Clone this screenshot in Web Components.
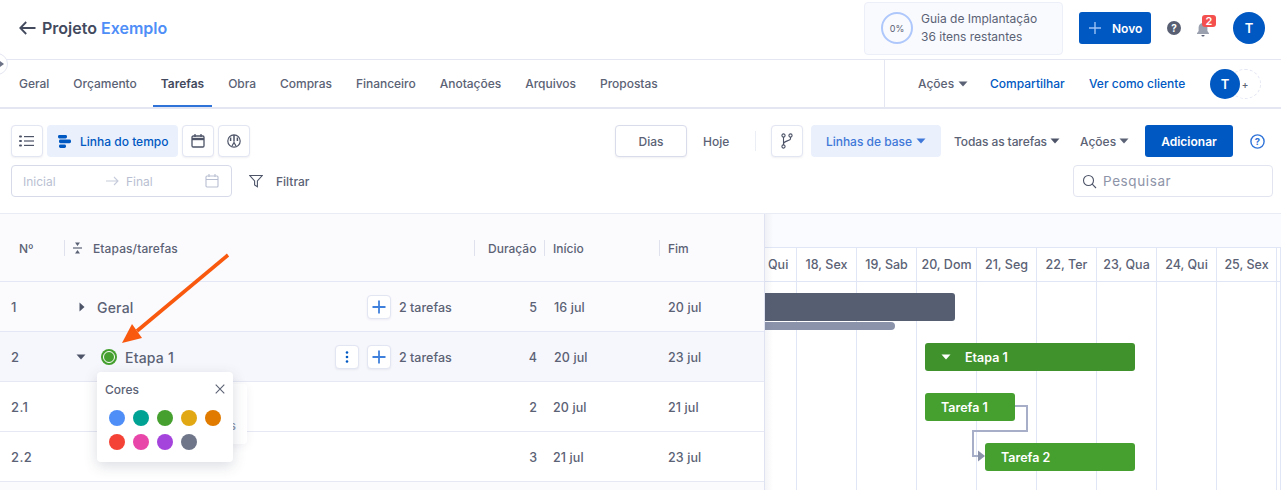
<!DOCTYPE html>
<html lang="pt-BR">
<head>
<meta charset="utf-8">
<title>Projeto Exemplo</title>
<style>
html, body { margin: 0; padding: 0; height: 490px; overflow: hidden; background: #fff; }
body { font-family: Inter, "Liberation Sans", sans-serif; color: #5b6275; }
</style>
</head>
<body>
<project-app></project-app>
<script>
const caret = (color, size = 10) => `<svg width="${size}" height="6" viewBox="0 0 10 6" style="flex:none"><path d="M0.5 0.5h9L5 5.5z" fill="${color}"/></svg>`;

class IconBtn extends HTMLElement {
    connectedCallback() {
        if (this.shadowRoot) return;
        this.attachShadow({ mode: 'open' });
        this.shadowRoot.innerHTML = `
<style>
:host {
    display: inline-flex;
    align-items: center;
    justify-content: center;
    box-sizing: border-box;
    width: var(--btn-size, 32px);
    height: var(--btn-size, 32px);
    background: #fff;
    border: 1px solid #e2e5f2;
    border-radius: 4px;
    box-shadow: 0 1px 2px rgba(60, 70, 110, .08);
    flex: none;
}
</style>
<slot></slot>`;
    }
}

class AppHeader extends HTMLElement {
    connectedCallback() {
        this.attachShadow({ mode: 'open' });
        this.shadowRoot.innerHTML = `
<style>
:host { display: flex; align-items: center; height: 56px; padding: 0 16px 3px 19px; border-bottom: 1px solid #e4e7f2; }
.back { display: block; margin-right: 6px; }
h1 { margin: 0; font-size: 16px; font-weight: 600; color: #434a5e; line-height: 20px; }
h1 span { color: #4f8ef7; }
.guide { margin-left: auto; width: 199px; height: 53px; box-sizing: border-box; background: #f9fafe; border: 1px solid #eceff8; border-radius: 4px; display: flex; align-items: center; padding-left: 16px; }
.ring { width: 32px; height: 32px; box-sizing: border-box; border: 2px solid #afc8fb; border-radius: 50%; display: flex; align-items: center; justify-content: center; font-size: 9px; color: #5b6275; margin-right: 8px; }
.guide div.t { font-size: 12px; line-height: 18px; color: #5b6275; }
.novo { margin-left: 16px; width: 72px; height: 32px; background: #0058c2; border-radius: 3px; color: #fff; font-size: 12px; font-weight: 600; display: flex; align-items: center; box-sizing: border-box; padding-left: 10px; gap: 11px; }
.help { margin-left: 16px; display: block; }
.bell { position: relative; margin-left: 15px; width: 16px; height: 32px; display: flex; align-items: center; }
.bell svg { margin-top: 3px; }
.badge { position: absolute; left: 6px; top: 3px; width: 14px; height: 12px; border-radius: 3px; background: #f4504d; color: #fff; font-size: 11px; font-weight: 600; line-height: 12px; text-align: center; }
.avatar { margin-left: 21px; width: 32px; height: 32px; border-radius: 50%; background: #0058c2; color: #fff; font-size: 13px; font-weight: 600; display: flex; align-items: center; justify-content: center; }
</style>
<svg class="back" width="17" height="14" viewBox="0 0 17 14" fill="none" stroke="#434a5e" stroke-width="1.8"><path d="M16.5 7H1.5M7.2 1L1.3 7l5.9 6"/></svg>
<h1>Projeto <span>Exemplo</span></h1>
<div class="guide">
  <div class="ring">0%</div>
  <div class="t">Guia de Implantação<br>36 itens restantes</div>
</div>
<div class="novo"><svg width="12" height="12" viewBox="0 0 12 12" stroke="#9cc1f5" stroke-width="1.4"><path d="M6 0v12M0 6h12"/></svg>Novo</div>
<svg class="help" width="14" height="14" viewBox="0 0 14 14"><circle cx="7" cy="7" r="7" fill="#585f72"/><text x="7" y="10.5" text-anchor="middle" font-size="10" font-weight="700" fill="#fff" font-family="Inter">?</text></svg>
<div class="bell">
  <svg width="14" height="15" viewBox="0 0 14 15" fill="#9aa0ae"><path d="M7 1a4.4 4.4 0 0 0-4.4 4.4V9L1 11.2v.8h12v-.8L11.4 9V5.4A4.4 4.4 0 0 0 7 1z"/><path d="M5.4 13h3.2a1.6 1.6 0 0 1-3.2 0z" fill="#585f72"/></svg>
  <div class="badge">2</div>
</div>
<div class="avatar">T</div>`;
    }
}

class AppTabs extends HTMLElement {
    connectedCallback() {
        this.attachShadow({ mode: 'open' });
        const tabs = ['Geral', 'Orçamento', 'Tarefas', 'Obra', 'Compras', 'Financeiro', 'Anotações', 'Arquivos', 'Propostas'];
        this.shadowRoot.innerHTML = `
<style>
:host { display: flex; height: 47px; border-bottom: 2px solid #e4e7f2; font-size: 12px; position: relative; }
.handle { position: absolute; left: -14px; top: -7px; width: 20px; height: 20px; border: 1px solid #e4e7f2; border-radius: 50%; background: #fff; }
.handle::after { content: ''; position: absolute; left: 13px; top: 7px; border-left: 4px solid #6d7488; border-top: 3px solid transparent; border-bottom: 3px solid transparent; }
.tabs { display: flex; padding-left: 11px; width: 884px; box-sizing: border-box; gap: 8px; }
.tab { padding: 0 8px; height: 47px; line-height: 48px; color: #5b6275; font-weight: 500; white-space: nowrap; letter-spacing: -.02px; }
.tab.on { color: #434a5e; font-weight: 600; border-bottom: 2px solid #2f73d8; height: 45px; }
.right { flex: 1; display: flex; align-items: center; border-left: 1px solid #e4e7f2; padding-left: 33px; font-weight: 500; }
.acoes { display: flex; align-items: center; gap: 4px; color: #5b6275; width: 72px; }
a { color: #0058c2; text-decoration: none; }
.share { width: 99px; }
.view { width: 121px; }
.people { display: flex; align-items: center; position: relative; width: 51px; height: 30px; }
.dash { position: absolute; left: 19px; top: 0; width: 32px; height: 30px; box-sizing: border-box; border: 1px dashed #e2e5f2; border-radius: 50%; color: #5b6275; font-size: 10px; line-height: 28px; text-align: center; }
.av { position: absolute; left: 0; top: 0; width: 30px; height: 30px; border-radius: 50%; background: #0058c2; color: #fff; font-size: 13px; font-weight: 600; text-align: center; line-height: 30px; }
</style>
<div class="handle"></div>
<div class="tabs">${tabs.map(t => `<div class="tab${t === 'Tarefas' ? ' on' : ''}">${t}</div>`).join('')}</div>
<div class="right">
  <div class="acoes">Ações ${caret('#5b6275')}</div>
  <a class="share">Compartilhar</a>
  <a class="view">Ver como cliente</a>
  <div class="people"><div class="dash">+</div><div class="av">T</div></div>
</div>`;
    }
}

class GanttToolbar extends HTMLElement {
    connectedCallback() {
        this.attachShadow({ mode: 'open' });
        this.shadowRoot.innerHTML = `
<style>
:host { display: block; height: 105px; box-sizing: border-box; padding: 16px 8px 0 11px; font-size: 12px; font-weight: 500; border-bottom: 1px solid #e9ebf5; background: #fff; }
.row { display: flex; align-items: center; height: 32px; }
.row + .row { margin-top: 8px; }
.group { display: flex; align-items: center; gap: 4px; }
.tl { width: 131px; height: 32px; border-radius: 4px; background: #eaf0fc; color: #0058c2; display: flex; align-items: center; gap: 9px; padding-left: 11px; box-sizing: border-box; }
.right { margin-left: auto; display: flex; align-items: center; }
.dias { width: 72px; height: 32px; box-sizing: border-box; border: 1px solid #d9dcea; border-radius: 4px; background: #fff; display: flex; align-items: center; justify-content: center; box-shadow: 0 1px 2px rgba(60, 70, 110, .08); }
.hoje { margin-left: 16px; width: 36px; }
.sep { width: 1px; height: 20px; background: #eceef5; margin: 0 15px 0 16px; }
.base { margin-left: 8px; width: 130px; height: 32px; border-radius: 4px; background: #eaf0fc; color: #3f78d8; display: flex; align-items: center; justify-content: center; gap: 4px; }
.drop { display: flex; align-items: center; justify-content: space-between; white-space: nowrap; }
.all { margin-left: 13px; width: 106px; letter-spacing: -.1px; }
.act { margin-left: 20px; width: 49px; }
.add { margin-left: 16px; width: 88px; height: 32px; border-radius: 3px; background: #0058c2; color: #fff; font-weight: 600; display: flex; align-items: center; justify-content: center; }
.qm { margin-left: 17px; display: block; margin-right: 8px; }
.dates { width: 221px; height: 32px; box-sizing: border-box; border: 1px solid #d7dbe9; border-radius: 4px; display: flex; align-items: center; padding-left: 11px; color: #b9bfd2; font-weight: 400; position: relative; }
.dates .a { width: 83px; }
.dates .b { margin-left: 7px; }
.dates svg.c { position: absolute; right: 12px; top: 8px; }
.filter { margin-left: 17px; display: block; margin-right: 13px; }
.search { margin-left: auto; width: 200px; height: 32px; box-sizing: border-box; border: 1px solid #e2e5f0; border-radius: 4px; display: flex; align-items: center; padding-left: 8px; gap: 6px; color: #8e94a8; font-weight: 400; font-size: 13.5px; letter-spacing: .6px; }
</style>
<div class="row">
  <div class="group">
    <icon-btn><svg width="16" height="12" viewBox="0 0 16 12" fill="#4d5468"><rect x="0" y="0.5" width="3" height="2" rx="1"/><rect x="0" y="5" width="3" height="2" rx="1"/><rect x="0" y="9.5" width="3" height="2" rx="1"/><rect x="5" y="1" width="10" height="1.2"/><rect x="5" y="5.4" width="10" height="1.2"/><rect x="5" y="9.8" width="10" height="1.2"/></svg></icon-btn>
    <div class="tl"><svg width="13" height="13" viewBox="0 0 13 13" fill="#0058c2"><rect x="0" y="0" width="9" height="3.4" rx="1.4"/><rect x="1" y="4.6" width="12" height="3.6" rx="1.4"/><rect x="1" y="9.5" width="7" height="3.4" rx="1.4"/></svg>Linha do tempo</div>
    <icon-btn><svg width="14" height="14" viewBox="0 0 14 14" fill="none" stroke="#4d5468" stroke-width="1.3"><rect x="1" y="2" width="12" height="11" rx="1.2"/><path d="M1 5h12" stroke-width="2.4"/><path d="M4 0v3M10 0v3"/></svg></icon-btn>
    <icon-btn><svg width="14" height="14" viewBox="0 0 14 14" fill="none" stroke="#4d5468" stroke-width="1.2"><circle cx="7" cy="7" r="6.2"/><path d="M7 1v6.5M3.6 3.5v3.6M10.4 3.5v3.6" stroke-width="1.5"/><path d="M5 12l2-3.5 2 3.5"/></svg></icon-btn>
  </div>
  <div class="right">
    <div class="dias">Dias</div>
    <div class="hoje">Hoje</div>
    <div class="sep"></div>
    <icon-btn><svg width="12" height="16" viewBox="0 0 12 16" fill="none" stroke="#4d5468" stroke-width="1.1"><circle cx="2.5" cy="2.5" r="1.6"/><circle cx="9.5" cy="2.5" r="1.6"/><circle cx="2.5" cy="13.5" r="1.6"/><path d="M2.5 4.1v7.8M9.5 4.1v1.6c0 2.4-7 2-7 5"/></svg></icon-btn>
    <div class="base">Linhas de base ${caret('#3f78d8')}</div>
    <div class="drop all">Todas as tarefas ${caret('#4d5468')}</div>
    <div class="drop act">Ações ${caret('#5b6275')}</div>
    <div class="add">Adicionar</div>
    <svg class="qm" width="15" height="15" viewBox="0 0 15 15"><circle cx="7.5" cy="7.5" r="6.6" fill="none" stroke="#2f73d8" stroke-width="1.4"/><text x="7.5" y="11" text-anchor="middle" font-size="9.5" font-weight="700" fill="#2f73d8" font-family="Inter">?</text></svg>
  </div>
</div>
<div class="row">
  <div class="dates">
    <span class="a">Inicial</span>
    <svg width="13" height="10" viewBox="0 0 13 10" fill="none" stroke="#c7ccdc" stroke-width="1.1"><path d="M0 5h12M8 1l4 4-4 4"/></svg>
    <span class="b">Final</span>
    <svg class="c" width="14" height="14" viewBox="0 0 14 14" fill="none" stroke="#b9bfd2" stroke-width="1.1"><rect x="1" y="2" width="12" height="11" rx="1"/><path d="M1 5.5h12M4 0v3M10 0v3"/></svg>
  </div>
  <svg class="filter" width="14" height="14" viewBox="0 0 14 14" fill="none" stroke="#4d5468" stroke-width="1.1"><path d="M.8 1.5h12.4L8.4 7v5.8L5.6 11V7z"/></svg>
  <span>Filtrar</span>
  <div class="search"><svg width="15" height="15" viewBox="0 0 15 15" fill="none" stroke="#4d5468" stroke-width="1.1"><circle cx="6.5" cy="6.5" r="5"/><path d="M10.2 10.2L14 14"/></svg>Pesquisar</div>
</div>`;
    }
}

class GanttTable extends HTMLElement {
    connectedCallback() {
        this.attachShadow({ mode: 'open' });
        const plus = `<icon-btn><svg width="14" height="14" viewBox="0 0 14 14" stroke="#3f80dc" stroke-width="1.8"><path d="M7 0.5v13M0.5 7h13"/></svg></icon-btn>`;
        const dots = `<icon-btn><svg width="4" height="12" viewBox="0 0 4 12" fill="#0058c2"><circle cx="2" cy="1.5" r="1.3"/><circle cx="2" cy="6" r="1.3"/><circle cx="2" cy="10.5" r="1.3"/></svg></icon-btn>`;
        this.shadowRoot.innerHTML = `
<style>
:host { display: block; width: 765px; flex: none; box-sizing: border-box; border-right: 1px solid #dfe3f1; font-size: 12.5px; font-weight: 500; --btn-size: 24px; position: relative; z-index: 1; }
.head, .row { display: grid; grid-template-columns: 65px 410px 70px 115px 1fr; }
.head { height: 68px; background: #fbfbfe; border-bottom: 1px solid #e4e7f5; color: #5b6275; font-size: 12px; box-sizing: border-box; }
.head > div { display: flex; align-items: center; height: 16px; margin: 26px 0 0 -1px; box-sizing: border-box; border-left: 1px solid #dfe2ec; padding-left: 8px; }
.head > div:first-child { border-left: none; padding-left: 19px; margin-left: 0; }
.head .etapas { gap: 10px; padding-left: 7px; letter-spacing: .1px; }
.head .dur { padding-left: 13px; }
.row { height: 50px; box-sizing: border-box; padding-top: 1px; border-bottom: 1px solid #e6e8f3; align-items: center; }
.row.a { background: #fbfbfe; border-bottom-color: #e4e7f5; }
.row.b { background: #f6f7fc; }
.row.c { background: #fff; }
.row.d { background: #fbfbfe; }
.num { padding-left: 11px; font-size: 13px; letter-spacing: .4px; }
.name { display: flex; align-items: center; padding-left: 11px; height: 100%; }
.name .label { font-size: 14px; color: #5b6275; letter-spacing: .2px; }
.tree { width: 21px; display: flex; flex: none; }
.tree.closed svg { margin-left: 3px; }
.status { width: 16px; height: 16px; box-sizing: border-box; border-radius: 50%; background: #45a02f; padding: 2px; margin-left: 4px; margin-right: 8px; flex: none; }
.status::after { content: ''; display: block; width: 12px; height: 12px; box-sizing: border-box; border: 1.2px solid #fff; border-radius: 50%; }
.tools { margin-left: auto; display: flex; align-items: center; gap: 8px; }
.count { width: 76px; padding-right: 8px; box-sizing: border-box; white-space: nowrap; }
.r { text-align: right; padding-right: 8px; }
.start, .end { letter-spacing: .1px; }
.start { padding-left: 9px; }
.end { padding-left: 8px; }
.row.c .start { padding-left: 8px; }
</style>
<div class="head">
  <div>Nº</div>
  <div class="etapas"><svg width="11" height="14" viewBox="0 0 11 14" fill="#5b6275"><rect x="1" y="6.4" width="9" height="1.2"/><path d="M5.5 5L3 1.5h5zM5.5 9L8 12.5H3z"/></svg><span>Etapas/tarefas</span></div>
  <div class="dur">Duração</div>
  <div>Início</div>
  <div>Fim</div>
</div>
<div class="row a">
  <div class="num">1</div>
  <div class="name"><span class="tree closed"><svg width="6" height="10" viewBox="0 0 6 10"><path d="M.5 0.5v9L5.5 5z" fill="#4d5468"/></svg></span><span class="label">Geral</span>
    <span class="tools">${plus}<span class="count">2 tarefas</span></span></div>
  <div class="r">5</div><div class="start">16 jul</div><div class="end">20 jul</div>
</div>
<div class="row b">
  <div class="num">2</div>
  <div class="name"><span class="tree">${caret('#4d5468')}</span><span class="status"></span><span class="label">Etapa 1</span>
    <span class="tools">${dots}${plus}<span class="count">2 tarefas</span></span></div>
  <div class="r">4</div><div class="start">20 jul</div><div class="end">23 jul</div>
</div>
<div class="row c"><div class="num">2.1</div><div></div><div class="r">2</div><div class="start">20 jul</div><div class="end">21 jul</div></div>
<div class="row c"><div class="num">2.2</div><div></div><div class="r">3</div><div class="start">21 jul</div><div class="end">23 jul</div></div>
<div class="row d"></div>`;
    }
}

class GanttChart extends HTMLElement {
    connectedCallback() {
        this.attachShadow({ mode: 'open' });
        const days = ['Qui', '18, Sex', '19, Sab', '20, Dom', '21, Seg', '22, Ter', '23, Qua', '24, Qui', '25, Sex'];
        this.shadowRoot.innerHTML = `
<style>
:host { display: block; flex: 1; position: relative; overflow: hidden; font-size: 12.5px; font-weight: 500; color: #5b6275; }
.band { height: 34px; box-sizing: border-box; background: #fafbfe; border-bottom: 1px solid #e1e6f6; }
.days { display: grid; grid-template-columns: 32px repeat(8, 60px) 1fr; height: 34px; box-sizing: border-box; border-bottom: 1px solid #e1e6f6; }
.days > div { border-right: 1px solid #e1e6f6; display: flex; align-items: center; justify-content: center; white-space: nowrap; }
.days > div:first-child { justify-content: flex-start; padding-left: 3px; }
.grid { position: absolute; top: 68px; left: 0; bottom: 0; right: 0; display: grid; grid-template-columns: 32px repeat(8, 60px) 1fr; }
.grid div { border-right: 1px solid #e1e6f6; }
.shade { position: absolute; top: 0; left: 0; bottom: 0; width: 8px; background: linear-gradient(to right, rgba(60, 70, 110, .06), transparent); }
.bar { position: absolute; height: 28px; border-radius: 3px; color: #fff; font-weight: 600; display: flex; align-items: center; }
.links { position: absolute; left: 200px; top: 185px; }
</style>
<div class="band"></div>
<div class="days">${days.map(d => `<div>${d}</div>`).concat('<div></div>').join('')}</div>
<div class="grid">${'<div></div>'.repeat(10)}</div>
<div class="bar" style="left:0;top:79px;width:190px;background:#565e72;border-radius:0 3px 3px 0"></div>
<div class="bar" style="left:0;top:108px;width:130px;height:8px;background:#8b93ab;border-radius:0 4px 4px 0"></div>
<div class="bar" style="left:160px;top:129px;width:210px;background:#3f922c;padding-left:16px;box-sizing:border-box;gap:14px">${caret('#fff')}Etapa 1</div>
<div class="bar" style="left:160px;top:179px;width:90px;background:#45a02f;padding-left:16px;box-sizing:border-box">Tarefa 1</div>
<div class="bar" style="left:220px;top:229px;width:150px;background:#45a02f;padding-left:16px;box-sizing:border-box">Tarefa 2</div>
<svg class="links" width="70" height="70" viewBox="0 0 70 70" fill="none">
  <path d="M50 7H62V32H8V57H14" stroke="#a6aec8" stroke-width="2"/>
  <path d="M13 51.5L20 57l-7 5.5z" fill="#8b93ab"/>
</svg>
<div class="shade"></div>`;
    }
}

class ColorPopover extends HTMLElement {
    connectedCallback() {
        this.attachShadow({ mode: 'open' });
        const colors = ['#4f8ef7', '#00a294', '#45a02f', '#e2a814', '#e07b00', '#f44336', '#e846a8', '#a544dc', '#6f768a'];
        this.shadowRoot.innerHTML = `
<style>
:host { display: block; position: absolute; left: 97px; top: 372px; z-index: 3; font-weight: 500; }
.under { position: absolute; left: 40px; top: 12px; width: 110px; height: 60px; background: #fff; border-radius: 4px; box-shadow: 0 2px 8px rgba(60, 70, 110, .08); color: #8e94a8; font-size: 12px; }
.under span { position: absolute; right: 11px; top: 34px; }
.card { position: relative; width: 136px; height: 90px; box-sizing: border-box; background: #fff; border-radius: 4px; box-shadow: 0 4px 14px rgba(50, 60, 90, .18); padding: 9px 8px; }
.top { display: flex; justify-content: space-between; align-items: center; height: 16px; font-size: 12px; color: #5b6275; }
.dots { display: grid; grid-template-columns: repeat(5, 16px); gap: 8px; margin: 13px 0 0 4px; }
.dots i { display: block; width: 16px; height: 16px; border-radius: 50%; }
</style>
<div class="under"><span>s</span></div>
<div class="card">
  <div class="top"><span>Cores</span><svg width="10" height="10" viewBox="0 0 10 10" stroke="#5b6275" stroke-width="1.1"><path d="M.7.7l8.6 8.6M9.3.7L.7 9.3"/></svg></div>
  <div class="dots">${colors.map(c => `<i style="background:${c}"></i>`).join('')}</div>
</div>`;
    }
}

class ProjectApp extends HTMLElement {
    connectedCallback() {
        this.attachShadow({ mode: 'open' });
        this.shadowRoot.innerHTML = `
<style>
:host { display: block; position: relative; width: 1281px; height: 490px; overflow: hidden; background: #fff; }
.gantt { display: flex; height: 276px; }
.arrow { position: absolute; left: 110px; top: 245px; z-index: 4; }
</style>
<app-header></app-header>
<app-tabs></app-tabs>
<gantt-toolbar></gantt-toolbar>
<div class="gantt">
  <gantt-table></gantt-table>
  <gantt-chart></gantt-chart>
</div>
<color-popover></color-popover>
<svg class="arrow" width="130" height="110" viewBox="0 0 130 110">
  <path d="M118 10L27 86" stroke="#f8590f" stroke-width="3.6" fill="none"/>
  <path d="M12 98L22 79 32 93z" fill="#f8590f"/>
</svg>`;
    }
}

customElements.define('icon-btn', IconBtn);
customElements.define('app-header', AppHeader);
customElements.define('app-tabs', AppTabs);
customElements.define('gantt-toolbar', GanttToolbar);
customElements.define('gantt-table', GanttTable);
customElements.define('gantt-chart', GanttChart);
customElements.define('color-popover', ColorPopover);
customElements.define('project-app', ProjectApp);
</script>
</body>
</html>
